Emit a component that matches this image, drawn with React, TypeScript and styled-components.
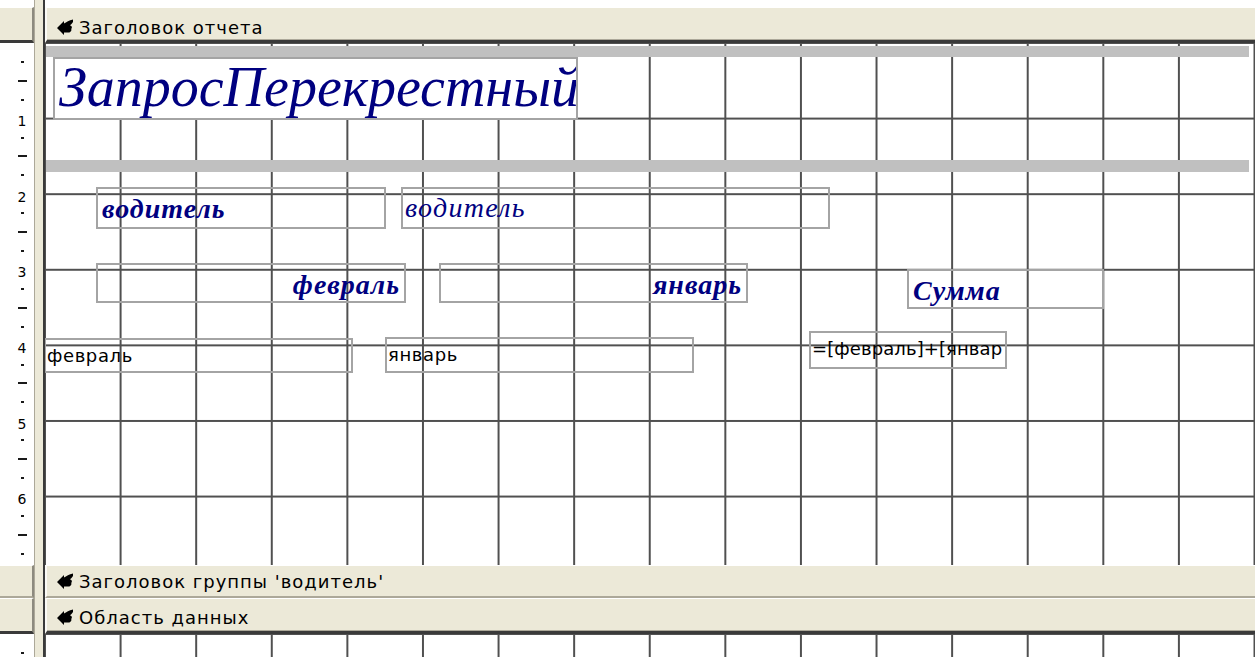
import React from "react";
import styled, { createGlobalStyle } from "styled-components";

// one ruler unit of the design surface, in px
const CELL = 75.6;
const TICK = CELL / 4;

const GlobalStyle = createGlobalStyle`
  *, *::before, *::after { box-sizing: border-box; }
  html, body { margin: 0; padding: 0; background: #fff; overflow: hidden; }
`;

const Designer = styled.div`
  display: grid;
  grid-template-columns: 34px 11px 1210px;
  grid-template-rows: 7px 36px 522px 33px 36px 23px;
  width: 1255px;
  height: 657px;
  overflow: hidden;
  background: #fff;
`;

const Splitter = styled.div`
  grid-column: 2;
  grid-row: 1 / -1;
  background: #ece9d8;
  border-left: 1px solid #aca899;
  border-right: 2px solid #3a3a3a;
`;

const RulerBox = styled.div<{ $row: number; $edge: "dark" | "soft" }>`
  grid-column: 1;
  grid-row: ${(p) => p.$row};
  background: #ece9d8;
  border-top: 1px solid #fff;
  border-right: 2px solid #8d8a7f;
  border-bottom: ${(p) => (p.$edge === "dark" ? "3px solid #3a3a3a" : "2px solid #aca899")};
`;

const SectionBar = styled.div<{ $row: number; $edge: "dark" | "soft"; $lift: number }>`
  grid-column: 3;
  grid-row: ${(p) => p.$row};
  display: flex;
  align-items: center;
  gap: 6px;
  padding: ${(p) => p.$lift}px 0 0 10px;
  background: #ece9d8;
  border-top: 1px solid #fff;
  border-left: 2px solid #fbfaf6;
  border-bottom: ${(p) => (p.$edge === "dark" ? "3px solid #3a3a3a" : "2px solid #aca899")};
  box-shadow: ${(p) => (p.$edge === "dark" ? "inset 0 -1px #aca899" : "none")};
  font-family: "DejaVu Sans", "Liberation Sans", sans-serif;
  font-size: 18px;
  letter-spacing: 1px;
  color: #000;
  white-space: nowrap;
`;

const RulerStrip = styled.div<{ $row: number }>`
  grid-column: 1;
  grid-row: ${(p) => p.$row};
  display: flex;
  flex-direction: column;
  padding-top: ${TICK / 2}px;
  overflow: hidden;
  background: #fff;
`;

const Tick = styled.div`
  flex: 0 0 ${TICK}px;
  display: flex;
  align-items: center;
  justify-content: center;
  padding-left: 10px;
`;

const Mark = styled.span<{ $long?: boolean }>`
  width: ${(p) => (p.$long ? 9 : 3)}px;
  height: 2px;
  background: #1a1a1a;
`;

const Digit = styled.span`
  font-family: "DejaVu Sans", "Liberation Sans", sans-serif;
  font-size: 14px;
  line-height: 1;
  margin-top: 5px;
  color: #000;
`;

const Canvas = styled.div<{ $row: number }>`
  grid-column: 3;
  grid-row: ${(p) => p.$row};
  position: relative;
  overflow: hidden;
  background-color: #fff;
  background-image: linear-gradient(to right, #505050 2px, transparent 2px),
    linear-gradient(to bottom, #505050 2px, transparent 2px);
  background-size: ${CELL}px ${CELL}px;
  background-position: -1px -1px;
`;

const Band = styled.div<{ $top: number; $height: number }>`
  position: absolute;
  left: 1px;
  width: 1203px;
  top: ${(p) => p.$top}px;
  height: ${(p) => p.$height}px;
  background: #c0c0c0;
`;

type Box = { $x: number; $y: number; $w: number; $h: number };

const Control = styled.div<Box>`
  position: absolute;
  left: ${(p) => p.$x}px;
  top: ${(p) => p.$y}px;
  width: ${(p) => p.$w}px;
  height: ${(p) => p.$h}px;
  border: 2px solid #a4a4a4;
  overflow: hidden;
  white-space: nowrap;
  line-height: 1;
`;

const Title = styled(Control)`
  padding: 0 4px;
  font-family: "Liberation Serif", "Times New Roman", serif;
  font-style: italic;
  font-size: 56px;
  color: #000080;
  background: #fff;
`;

const Caption = styled(Control)<{ $right?: boolean }>`
  padding: 6px 4px 0;
  text-align: ${(p) => (p.$right ? "right" : "left")};
  font-family: "Liberation Serif", "Times New Roman", serif;
  font-style: italic;
  font-weight: bold;
  font-size: 28px;
  letter-spacing: 1px;
  color: #000080;
`;

const BoundText = styled(Control)`
  padding: 5px 2px 0;
  font-family: "Liberation Serif", "Times New Roman", serif;
  font-style: italic;
  font-size: 28px;
  letter-spacing: 1.3px;
  color: #000080;
`;

const Field = styled(Control)`
  padding: 7px 1px 0;
  font-family: "DejaVu Sans", "Liberation Sans", sans-serif;
  font-size: 18px;
  letter-spacing: 0.6px;
  color: #000;
`;

const ExprField = styled(Field)`
  padding: 7px 0 0 1px;
  letter-spacing: 0.1px;
`;

const SectionGlyph: React.FC = () => (
  <svg width="16" height="16" viewBox="0 0 16 16">
    <path
      d="M0 9 L7 2 L7 4.5 C9.5 3 12 1.5 16 0.5 L16 3 C15 4.5 14 5.5 13 6.2 C15 6.8 15.5 8.5 14.2 10 C15 11.5 13.5 13.5 11.5 13.5 L7 13.5 L7 16 Z"
      fill="#000"
    />
  </svg>
);

const Ruler: React.FC<{ row: number; ticks: number }> = ({ row, ticks }) => (
  <RulerStrip $row={row}>
    {Array.from({ length: ticks }, (_, i) => {
      const k = i + 1;
      return (
        <Tick key={k}>
          {k % 4 === 0 ? <Digit>{k / 4}</Digit> : <Mark $long={k % 4 === 2} />}
        </Tick>
      );
    })}
  </RulerStrip>
);

export default function App() {
  return (
    <>
      <GlobalStyle />
      <Designer>
        <Splitter />

        <RulerBox $row={2} $edge="dark" />
        <SectionBar $row={2} $edge="dark" $lift={6}>
          <SectionGlyph />
          Заголовок отчета
        </SectionBar>

        <Ruler row={3} ticks={27} />
        <Canvas $row={3}>
          <Band $top={3} $height={11} />
          <Band $top={117} $height={12} />
          <Title $x={8} $y={14} $w={525} $h={63}>ЗапросПерекрестный</Title>

          <Caption $x={51} $y={144} $w={290} $h={42}>водитель</Caption>
          <BoundText $x={356} $y={144} $w={429} $h={42}>водитель</BoundText>

          <Caption $x={51} $y={220} $w={310} $h={40} $right>февраль</Caption>
          <Caption $x={394} $y={220} $w={309} $h={40} $right>январь</Caption>
          <Caption $x={862} $y={226} $w={197} $h={40}>Сумма</Caption>

          <Field $x={-1} $y={295} $w={309} $h={35}>февраль</Field>
          <Field $x={340} $y={294} $w={309} $h={36}>январь</Field>
          <ExprField $x={764} $y={288} $w={198} $h={38}>=[февраль]+[январ</ExprField>
        </Canvas>

        <RulerBox $row={4} $edge="soft" />
        <SectionBar $row={4} $edge="soft" $lift={0}>
          <SectionGlyph />
          Заголовок группы 'водитель'
        </SectionBar>

        <RulerBox $row={5} $edge="dark" />
        <SectionBar $row={5} $edge="dark" $lift={4}>
          <SectionGlyph />
          Область данных
        </SectionBar>

        <Ruler row={6} ticks={1} />
        <Canvas $row={6} />
      </Designer>
    </>
  );
}
